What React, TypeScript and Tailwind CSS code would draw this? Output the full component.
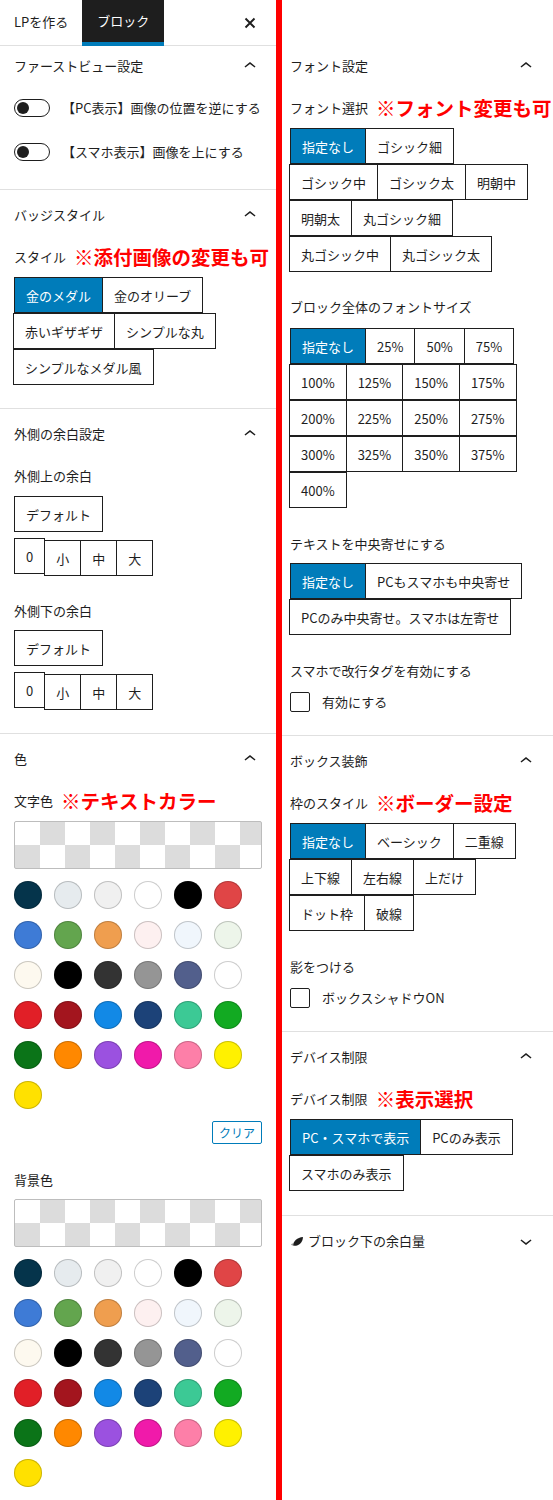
import React from 'react';

const COLORS = [
  '#05344b', '#e6ebee', '#f0f0f0', '#ffffff', '#000000', '#e04546',
  '#3e7bd6', '#63a54e', '#ef9e4f', '#fdf0f0', '#f0f6fc', '#edf5ea',
  '#fdf9ef', '#000000', '#333333', '#959595', '#525f8c', '#ffffff',
  '#e11f27', '#a3151e', '#1289e6', '#1c4278', '#3cc995', '#12aa22',
  '#0b7418', '#ff8800', '#9b51e0', '#f01aaa', '#fd7fa8', '#fff100',
  '#ffe100',
];

const Chevron = ({ down = false }: { down?: boolean }) => (
  <svg width="24" height="24" viewBox="0 0 24 24" fill="#1e1e1e" className="shrink-0">
    {down ? (
      <path d="M17.5 11.6L12 16l-5.5-4.4.9-1.2L12 14l4.6-3.6.9 1.2z" />
    ) : (
      <path d="M6.5 12.4L12 8l5.5 4.4-.9 1.2L12 10l-4.6 3.6-.9-1.2z" />
    )}
  </svg>
);

interface PanelProps {
  title: string;
  children?: React.ReactNode;
  side?: 'left' | 'right';
  headClass?: string;
  className?: string;
  pb?: string;
  icon?: React.ReactNode;
  open?: boolean;
}

const Panel = ({ title, children, side = 'left', headClass = 'h-[50px]', className = 'border-b border-[#e0e0e0]', pb = '', icon, open = true }: PanelProps) => (
  <div className={className}>
    <div className={`flex items-center justify-between ${headClass} ${side === 'left' ? 'px-[14px]' : 'pl-2 pr-[15px]'}`}>
      <span className="flex items-center gap-1">
        {icon}
        {title}
      </span>
      <Chevron down={!open} />
    </div>
    {children && <div className={`${side === 'left' ? 'px-[14px]' : 'pl-2 pr-[14px]'} ${pb}`}>{children}</div>}
  </div>
);

const Label = ({ text, note, className = 'mb-[3px]' }: { text: string; note?: string; className?: string }) => (
  <div className={`flex items-center h-[34px] whitespace-nowrap ${className}`}>
    <span className="shrink-0">{text}</span>
    {note && <span className="shrink-0 ml-2 text-[19.5px] font-bold leading-none text-[#ff0000]">{note}</span>}
  </div>
);

const Btn = ({ label, active = false, first = false, className = '' }: { label: string; active?: boolean; first?: boolean; className?: string }) => (
  <button
    className={`h-9 px-[11px] border border-[#1e1e1e] text-[13px] leading-none whitespace-nowrap ${active ? 'bg-[#007cba] text-white' : 'bg-white text-[#1e1e1e]'} ${first ? '' : '-ml-px'} ${className}`}
  >
    {label}
  </button>
);

const Group = ({ items, selected = true }: { items: string[]; selected?: boolean }) => (
  <div className="flex flex-wrap">
    {items.map((t, i) => (
      <Btn key={t + i} label={t} first={i === 0} active={selected && i === 0} />
    ))}
  </div>
);

const SizeSteps = () => (
  <div className="flex items-start mt-[6px]">
    {['0', '小', '中', '大'].map((t, i) => (
      <Btn key={t} label={t} first={i === 0} className={i > 0 ? 'mt-[2px]' : ''} />
    ))}
  </div>
);

const Toggle = ({ label }: { label: string }) => (
  <div className="flex items-center h-[44px] gap-3">
    <span className="relative w-9 h-[18px] shrink-0 rounded-full border border-[#1e1e1e] bg-white">
      <span className="absolute left-[2px] top-[2px] w-3 h-3 rounded-full bg-[#1e1e1e]" />
    </span>
    <span>{label}</span>
  </div>
);

const Check = ({ label }: { label: string }) => (
  <div className="flex items-center gap-3 h-5">
    <span className="w-5 h-5 shrink-0 rounded-[2px] border border-[#1e1e1e] bg-white" />
    <span>{label}</span>
  </div>
);

const Checker = () => (
  <div className="h-12 rounded-[2px] border border-[#bdbdbd] bg-[image:repeating-conic-gradient(#dcdcdc_0%_25%,#ffffff_0%_50%)] bg-[length:50px_46px]" />
);

const Swatches = () => (
  <div className="flex flex-wrap gap-3 mt-3">
    {COLORS.map((c, i) => (
      <span
        key={i}
        className="w-7 h-7 rounded-full shadow-[inset_0_0_0_1px_rgba(0,0,0,0.2)]"
        style={{ backgroundColor: c }}
      />
    ))}
  </div>
);

const SpacingIcon = () => (
  <svg width="14" height="12" viewBox="0 0 14 12" className="shrink-0">
    <path d="M3 10.5C3.5 6 7 2.5 13 2c-.3 5.5-4 8.8-8.5 8.8z" fill="#1e1e1e" />
    <path d="M1 9.5c.6-.9 1.3-1.2 2-1.1L3.4 10.6C2.5 10.7 1.6 10.4 1 9.5z" fill="#9a9a9a" />
  </svg>
);

export default function App() {
  return (
    <div className="flex w-[553px] h-[1500px] overflow-hidden bg-white text-[13px] leading-[1.4] text-[#1e1e1e] font-['Noto_Sans_CJK_JP','Noto_Sans',sans-serif]">
      {/* left sidebar */}
      <div className="w-[276px] shrink-0">
        <div className="flex h-[46px] border-b border-[#e0e0e0]">
          <div className="flex items-center px-[14px]">LPを作る</div>
          <div className="flex items-center px-[15px] -mb-px bg-[#1e1e1e] text-white border-b-4 border-[#007cba]">ブロック</div>
          <div className="flex items-center ml-auto mr-[20px]">
            <svg width="12" height="12" viewBox="0 0 12 12" fill="none" stroke="#1e1e1e" strokeWidth="1.9">
              <path d="M1.5 1.5l9 9M10.5 1.5l-9 9" />
            </svg>
          </div>
        </div>

        <Panel title="ファーストビュー設定" headClass="h-[40px]" pb="pb-[15px]">
          <Toggle label="【PC表示】画像の位置を逆にする" />
          <Toggle label="【スマホ表示】画像を上にする" />
        </Panel>

        <Panel title="バッジスタイル" pb="pb-[23px]">
          <Label text="スタイル" note="※添付画像の変更も可" />
          <Group items={['金のメダル', '金のオリーブ', '赤いギザギザ', 'シンプルな丸', 'シンプルなメダル風']} />
        </Panel>

        <Panel title="外側の余白設定" pb="pb-[23px]">
          <Label text="外側上の余白" />
          <Group items={['デフォルト']} selected={false} />
          <SizeSteps />
          <Label text="外側下の余白" className="mt-[18px] mb-[2px]" />
          <Group items={['デフォルト']} selected={false} />
          <SizeSteps />
        </Panel>

        <Panel title="色" className="">
          <Label text="文字色" note="※テキストカラー" />
          <Checker />
          <Swatches />
          <div className="flex justify-end mt-3">
            <button className="h-[23px] px-[6px] rounded-[2px] border border-[#007cba] text-[12px] leading-none text-[#007cba]">クリア</button>
          </div>
          <Label text="背景色" className="mt-[19px] mb-[2px]" />
          <Checker />
          <Swatches />
        </Panel>
      </div>

      <div className="w-[6px] shrink-0 bg-[#ff0000]" />

      {/* right sidebar */}
      <div className="w-[271px] shrink-0">
        <div className="h-[41px]" />

        <Panel title="フォント設定" side="right" pb="pb-[23px]">
          <Label text="フォント選択" note="※フォント変更も可" />
          <Group items={['指定なし', 'ゴシック細', 'ゴシック中', 'ゴシック太', '明朝中', '明朝太', '丸ゴシック細', '丸ゴシック中', '丸ゴシック太']} />
          <Label text="ブロック全体のフォントサイズ" className="mt-[18px] mb-1" />
          <Group items={['指定なし', '25%', '50%', '75%', '100%', '125%', '150%', '175%', '200%', '225%', '250%', '275%', '300%', '325%', '350%', '375%', '400%']} />
          <Label text="テキストを中央寄せにする" className="mt-[19px] mb-[2px]" />
          <Group items={['指定なし', 'PCもスマホも中央寄せ', 'PCのみ中央寄せ。スマホは左寄せ']} />
          <Label text="スマホで改行タグを有効にする" className="mt-[19px] mb-1" />
          <Check label="有効にする" />
        </Panel>

        <Panel title="ボックス装飾" side="right" pb="pb-[23px]">
          <Label text="枠のスタイル" note="※ボーダー設定" />
          <Group items={['指定なし', 'ベーシック', '二重線', '上下線', '左右線', '上だけ', 'ドット枠', '破線']} />
          <Label text="影をつける" className="mt-[19px] mb-1" />
          <Check label="ボックスシャドウON" />
        </Panel>

        <Panel title="デバイス制限" side="right" pb="pb-[24px]">
          <Label text="デバイス制限" note="※表示選択" />
          <Group items={['PC・スマホで表示', 'PCのみ表示', 'スマホのみ表示']} />
        </Panel>

        <Panel title="ブロック下の余白量" side="right" className="" open={false} icon={<SpacingIcon />} />
      </div>
    </div>
  );
}
